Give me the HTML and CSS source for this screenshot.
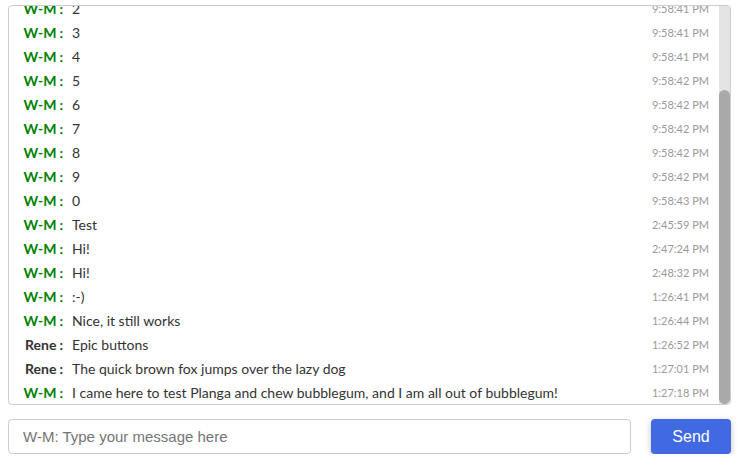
FILE: index.html
```html
<!DOCTYPE html>
<html>
<head>
<meta charset="utf-8">
<link rel="stylesheet" href="styles.css">
</head>
<body>
<div class="chat">
  <div class="log">
    <div class="rows">
      <div class="row"><span class="name wm">W-M<span class="colon">:</span></span><span class="msg">Hello</span><span class="time">9:58:39 PM</span></div>
      <div class="row"><span class="name wm">W-M<span class="colon">:</span></span><span class="msg">Counting</span><span class="time">9:58:40 PM</span></div>
      <div class="row"><span class="name wm">W-M<span class="colon">:</span></span><span class="msg">0</span><span class="time">9:58:40 PM</span></div>
      <div class="row"><span class="name wm">W-M<span class="colon">:</span></span><span class="msg">1</span><span class="time">9:58:41 PM</span></div>
      <div class="row"><span class="name wm">W-M<span class="colon">:</span></span><span class="msg">2</span><span class="time">9:58:41 PM</span></div>
      <div class="row"><span class="name wm">W-M<span class="colon">:</span></span><span class="msg">3</span><span class="time">9:58:41 PM</span></div>
      <div class="row"><span class="name wm">W-M<span class="colon">:</span></span><span class="msg">4</span><span class="time">9:58:41 PM</span></div>
      <div class="row"><span class="name wm">W-M<span class="colon">:</span></span><span class="msg">5</span><span class="time">9:58:42 PM</span></div>
      <div class="row"><span class="name wm">W-M<span class="colon">:</span></span><span class="msg">6</span><span class="time">9:58:42 PM</span></div>
      <div class="row"><span class="name wm">W-M<span class="colon">:</span></span><span class="msg">7</span><span class="time">9:58:42 PM</span></div>
      <div class="row"><span class="name wm">W-M<span class="colon">:</span></span><span class="msg">8</span><span class="time">9:58:42 PM</span></div>
      <div class="row"><span class="name wm">W-M<span class="colon">:</span></span><span class="msg">9</span><span class="time">9:58:42 PM</span></div>
      <div class="row"><span class="name wm">W-M<span class="colon">:</span></span><span class="msg">0</span><span class="time">9:58:43 PM</span></div>
      <div class="row"><span class="name wm">W-M<span class="colon">:</span></span><span class="msg">Test</span><span class="time">2:45:59 PM</span></div>
      <div class="row"><span class="name wm">W-M<span class="colon">:</span></span><span class="msg">Hi!</span><span class="time">2:47:24 PM</span></div>
      <div class="row"><span class="name wm">W-M<span class="colon">:</span></span><span class="msg">Hi!</span><span class="time">2:48:32 PM</span></div>
      <div class="row"><span class="name wm">W-M<span class="colon">:</span></span><span class="msg">:-)</span><span class="time">1:26:41 PM</span></div>
      <div class="row"><span class="name wm">W-M<span class="colon">:</span></span><span class="msg">Nice, it still works</span><span class="time">1:26:44 PM</span></div>
      <div class="row"><span class="name">Rene<span class="colon">:</span></span><span class="msg">Epic buttons</span><span class="time">1:26:52 PM</span></div>
      <div class="row"><span class="name">Rene<span class="colon">:</span></span><span class="msg">The quick brown fox jumps over the lazy dog</span><span class="time">1:27:01 PM</span></div>
      <div class="row"><span class="name wm">W-M<span class="colon">:</span></span><span class="msg">I came here to test Planga and chew bubblegum, and I am all out of bubblegum!</span><span class="time">1:27:18 PM</span></div>
    </div>
  </div>
  <div class="scrollbar">
    <div class="track"></div>
    <div class="thumb"></div>
  </div>
</div>
<form class="composer">
  <input class="input" type="text" placeholder="W-M: Type your message here">
  <button class="send" type="button">Send</button>
</form>
</body>
</html>
```
FILE: styles.css
```css
html, body {
  margin: 0;
  padding: 0;
  background: #fff;
}
body {
  padding: 5px 11px 0 8px;
  font-family: Lato, "Open Sans", sans-serif;
  color: #333;
}
.chat {
  display: flex;
  border: 1px solid #ccc;
  border-radius: 4px;
  height: 398px;
  overflow: hidden;
}
.log {
  flex: 1;
  height: 100%;
  overflow: hidden;
  display: flex;
  flex-direction: column-reverse;
}
.rows {
  display: flex;
  flex-direction: column;
  flex: none;
}
.row {
  display: flex;
  align-items: center;
  height: 24px;
  font-size: 14px;
}
.name {
  width: 54px;
  text-align: right;
  font-weight: bold;
  color: #333;
  flex: none;
}
.colon {
  margin-left: 3px;
}
.name.wm {
  color: #008000;
}
.msg {
  flex: 1;
  padding-left: 9px;
  color: #333;
}
.time {
  font-size: 11px;
  color: #999;
  padding-right: 10px;
}
.scrollbar {
  width: 11px;
  flex: none;
  display: flex;
  flex-direction: column;
  background: #e4e4e4;
}
.track {
  height: 84px;
  flex: none;
}
.thumb {
  flex: 1;
  background: #a9a9a9;
  border-radius: 6px;
}
.composer {
  display: flex;
  gap: 20px;
  margin: 14px 0 0 0;
}
.input {
  flex: 1;
  height: 35px;
  box-sizing: border-box;
  border: 1px solid #ccc;
  border-radius: 4px;
  padding: 0 14px;
  font-family: "Liberation Sans", Arial, sans-serif;
  font-size: 15px;
  color: #333;
  outline: none;
}
.input::placeholder {
  color: #757575;
}
.send {
  width: 80px;
  height: 35px;
  border: none;
  border-radius: 4px;
  background: #4169e1;
  color: #fff;
  font-family: "Liberation Sans", Arial, sans-serif;
  font-size: 16px;
  padding-top: 2px;
  box-shadow: 0 2px 6px rgba(0,0,0,0.25);
}
```
